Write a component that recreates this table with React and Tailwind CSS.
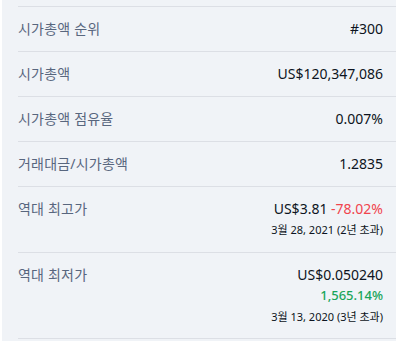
const rows = [
  { label: '시가총액 순위', value: '#300' },
  { label: '시가총액', value: 'US$120,347,086' },
  { label: '시가총액 점유율', value: '0.007%' },
  { label: '거래대금/시가총액', value: '1.2835' },
];

function Row({ label, children }) {
  return (
    <div className="flex justify-between border-t border-[#dcdfe5] pt-[11px] pr-[13px]">
      <span className="text-[14px] leading-[21px] text-[#58667e] tracking-[0.2px]">{label}</span>
      <div className="flex flex-col items-end">{children}</div>
    </div>
  );
}

export default function App() {
  return (
    <div
      className="w-[398px] h-[341px] bg-white pl-[2px] pr-[2px] overflow-hidden"
      style={{ fontFamily: '"Noto Sans", "Noto Sans CJK KR", sans-serif' }}
    >
      <div className="h-full bg-[#f0f3f7] pl-4 pt-[6px]">
        {rows.map((r) => (
          <div key={r.label} className="h-[45px]">
            <Row label={r.label}>
              <span className="text-[14px] leading-[21px] text-[#0d1421]">{r.value}</span>
            </Row>
          </div>
        ))}
        <div className="h-[66px]">
          <Row label="역대 최고가">
            <span className="text-[14px] leading-[21px] text-[#0d1421]">
              US$3.81 <span className="text-[#f0444e]">-78.02%</span>
            </span>
            <span className="text-[11px] leading-[21px] text-[#0d1421]">3월 28, 2021 (2년 초과)</span>
          </Row>
        </div>
        <div className="h-[87px] border-b border-[#dcdfe5]">
          <Row label="역대 최저가">
            <span className="text-[14px] leading-[21px] text-[#0d1421]">US$0.050240</span>
            <span className="text-[13px] leading-[21px] font-medium text-[#1aa55a]">1,565.14%</span>
            <span className="text-[11px] leading-[21px] text-[#0d1421]">3월 13, 2020 (3년 초과)</span>
          </Row>
        </div>
      </div>
    </div>
  );
}
